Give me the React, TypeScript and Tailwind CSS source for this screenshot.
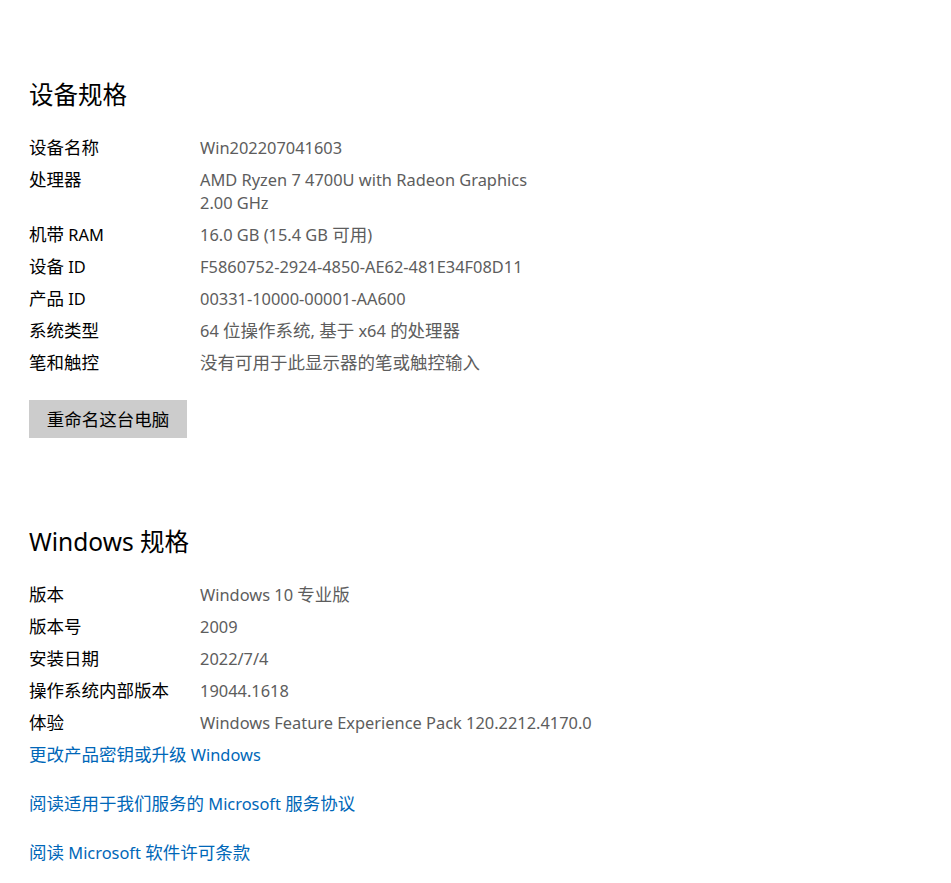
const latin = { fontFamily: '"Noto Sans", "Noto Sans CJK SC", sans-serif' }
const cjk = { fontFamily: '"Noto Sans CJK SC", "Noto Sans", sans-serif' }

// Windows links YaHei into Segoe UI at a slightly larger size, so split runs
function Mixed({ text, head = false }: { text: string; head?: boolean }) {
  const parts = text.split(/([\u3000-\u9fff\uff00-\uffef]+)/).filter(Boolean)
  return (
    <>
      {parts.map((p, i) =>
        /[\u3000-\u9fff\uff00-\uffef]/.test(p) ? (
          <span key={i} style={cjk} className={head ? 'text-[24.5px] leading-none' : 'text-[17.5px] leading-none'}>
            {p}
          </span>
        ) : (
          <span key={i} style={latin} className={head ? 'text-[24.5px] leading-none' : 'text-[16.4px] leading-none'}>
            {p}
          </span>
        ),
      )}
    </>
  )
}

type Row = { label: string; value: string[] }

const deviceRows: Row[] = [
  { label: '设备名称', value: ['Win202207041603'] },
  { label: '处理器', value: ['AMD Ryzen 7 4700U with Radeon Graphics', '2.00 GHz'] },
  { label: '机带 RAM', value: ['16.0 GB (15.4 GB 可用)'] },
  { label: '设备 ID', value: ['F5860752-2924-4850-AE62-481E34F08D11'] },
  { label: '产品 ID', value: ['00331-10000-00001-AA600'] },
  { label: '系统类型', value: ['64 位操作系统, 基于 x64 的处理器'] },
  { label: '笔和触控', value: ['没有可用于此显示器的笔或触控输入'] },
]

const windowsRows: Row[] = [
  { label: '版本', value: ['Windows 10 专业版'] },
  { label: '版本号', value: ['2009'] },
  { label: '安装日期', value: ['2022/7/4'] },
  { label: '操作系统内部版本', value: ['19044.1618'] },
  { label: '体验', value: ['Windows Feature Experience Pack 120.2212.4170.0'] },
]

function SpecList({ rows }: { rows: Row[] }) {
  return (
    <div className="flex flex-col gap-[9px]">
      {rows.map((r) => (
        <div key={r.label} className="flex text-[17px] leading-[23px]">
          <div className="w-[171px] shrink-0 text-black">
            <Mixed text={r.label} />
          </div>
          <div className="text-[#5d5d5d]">
            {r.value.map((v) => (
              <div key={v}>
                <Mixed text={v} />
              </div>
            ))}
          </div>
        </div>
      ))}
    </div>
  )
}

export default function App() {
  return (
    <div className="min-h-[883px] bg-white pl-[29px] pt-[77px]" style={latin}>
      <h2 className="text-[24.5px] leading-[36px] text-black">
        <Mixed text="设备规格" head />
      </h2>
      <div className="mt-[23px]">
        <SpecList rows={deviceRows} />
      </div>
      <button className="mt-[26px] h-[38px] w-[158px] bg-[#cccccc] text-[17px] leading-[23px] text-black">
        <Mixed text="重命名这台电脑" />
      </button>

      <h2 className="mt-[86px] text-[24.5px] leading-[36px] text-black">
        <Mixed text="Windows 规格" head />
      </h2>
      <div className="mt-[23px]">
        <SpecList rows={windowsRows} />
      </div>
      <div className="mt-[9px] flex flex-col items-start gap-[26px] text-[17px] leading-[23px] text-[#0067b8]">
        <a href="#">
          <Mixed text="更改产品密钥或升级 Windows" />
        </a>
        <a href="#">
          <Mixed text="阅读适用于我们服务的 Microsoft 服务协议" />
        </a>
        <a href="#">
          <Mixed text="阅读 Microsoft 软件许可条款" />
        </a>
      </div>
    </div>
  )
}
